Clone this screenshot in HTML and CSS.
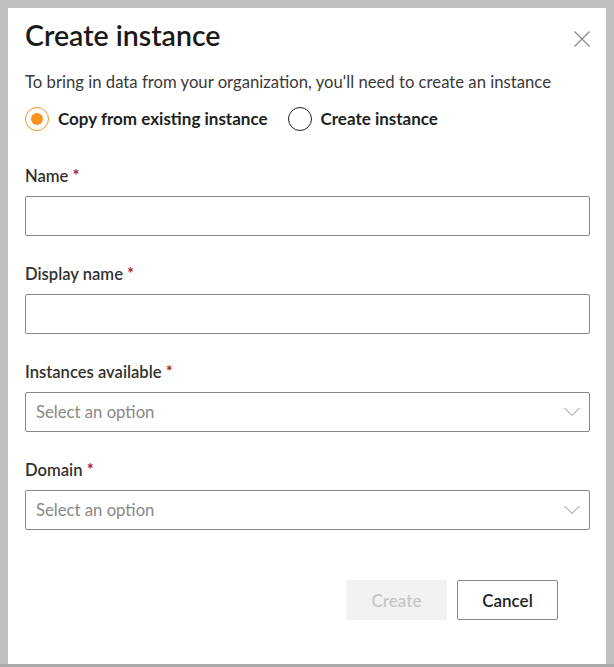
FILE: index.html
```html
<!DOCTYPE html>
<html lang="en">
<head>
<meta charset="utf-8">
<title>Create instance</title>
<link rel="stylesheet" href="styles.css">
</head>
<body>
<div class="frame">
  <div class="dialog">
    <div class="header">
      <h1 class="title">Create instance</h1>
      <button class="close" aria-label="Close">
        <svg width="16" height="16" viewBox="0 0 16 16"><path d="M0.5 0.5 L15.5 15.5 M15.5 0.5 L0.5 15.5" stroke="#8a8886" stroke-width="1.2" fill="none"/></svg>
      </button>
    </div>
    <p class="desc">To bring in data from your organization, you'll need to create an instance</p>
    <div class="radios">
      <label class="radio checked"><span class="dot"></span>Copy from existing instance</label>
      <label class="radio"><span class="dot"></span>Create instance</label>
    </div>
    <div class="field">
      <div class="label">Name <span class="req">*</span></div>
      <div class="input"></div>
    </div>
    <div class="field">
      <div class="label">Display name <span class="req">*</span></div>
      <div class="input"></div>
    </div>
    <div class="field">
      <div class="label">Instances available <span class="req">*</span></div>
      <div class="input select"><span class="placeholder">Select an option</span>
        <svg width="16" height="10" viewBox="0 0 16 10"><path d="M0.5 1 L8 8.5 L15.5 1" stroke="#8a8886" stroke-width="1" fill="none"/></svg>
      </div>
    </div>
    <div class="field">
      <div class="label">Domain <span class="req">*</span></div>
      <div class="input select"><span class="placeholder">Select an option</span>
        <svg width="16" height="10" viewBox="0 0 16 10"><path d="M0.5 1 L8 8.5 L15.5 1" stroke="#8a8886" stroke-width="1" fill="none"/></svg>
      </div>
    </div>
    <div class="actions">
      <button class="btn primary" disabled>Create</button>
      <button class="btn">Cancel</button>
    </div>
  </div>
</div>
</body>
</html>
```
FILE: styles.css
```css
html { background: #a9a9a9; }
body { margin: 0; font-family: Lato, "Open Sans", sans-serif; }
.frame { background: #c0c0c0; padding: 8px 8px 0; height: 656px; }
.dialog { background: #fff; height: 656px; padding: 0 16px 0 17px; box-sizing: border-box; }
.header { display: flex; justify-content: space-between; align-items: flex-start; padding-top: 7px; }
.title { margin: 0; font-size: 28.5px; font-weight: 600; color: #1b1a19; line-height: 40px; }
.close { border: 0; background: none; padding: 0; margin: 16px 0 0; width: 16px; height: 16px; }
.close svg { display: block; }
.desc { margin: 16px 0 0; font-size: 16.7px; color: #3b3a39; line-height: 22px; }
.radios { display: flex; gap: 20px; margin-top: 14px; }
.radio { display: flex; align-items: center; gap: 9px; font-size: 17px; font-weight: 700; color: #201f1e; line-height: 24px; }
.dot { width: 22px; height: 22px; border: 1px solid #201f1e; border-radius: 50%; display: flex; align-items: center; justify-content: center; }
.radio.checked .dot { border-color: #f7941d; }
.radio.checked .dot::after { content: ""; width: 12px; height: 12px; border-radius: 50%; background: #f7941d; }
.field { margin-top: 35px; }
.field + .field { margin-top: 28px; }
.label { font-size: 16.6px; font-weight: 600; color: #323130; line-height: 20px; }
.req { color: #a4262c; }
.input { margin-top: 10px; height: 40px; box-sizing: border-box; border: 1px solid #8a8886; border-radius: 2px; }
.select { display: flex; align-items: center; justify-content: space-between; padding: 0 9px 0 10px; }
.placeholder { font-size: 16.7px; color: #8a8886; }
.select svg { display: block; }
.actions { display: flex; justify-content: flex-end; gap: 10px; margin-top: 50px; padding-right: 32px; }
.btn { width: 101px; height: 40px; box-sizing: border-box; border: 1px solid #8a8886; border-radius: 2px; background: #fff; font-family: inherit; font-size: 17px; font-weight: 600; color: #201f1e; }
.btn.primary { border-color: #f3f2f1; background: #f3f2f1; color: #c8c6c4; }
```
